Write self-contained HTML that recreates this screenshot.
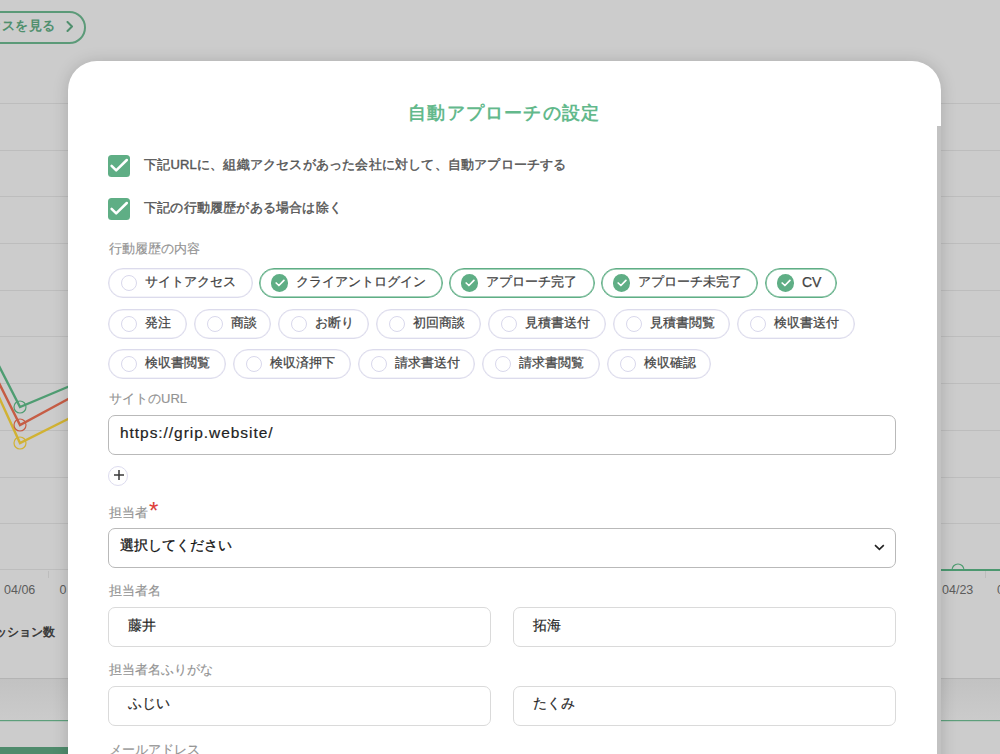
<!DOCTYPE html>
<html lang="ja">
<head>
<meta charset="utf-8">
<style>
*{box-sizing:border-box;margin:0;padding:0}
html,body{width:1000px;height:754px;overflow:hidden}
body{position:relative;background:#cccccc;font-family:"Liberation Sans",sans-serif;color:#333}
.abs{position:absolute}
.grid{position:absolute;left:0;width:1000px;height:1px;background:#bdbdbd}
.pillbtn{position:absolute;left:-60px;top:11px;width:146px;height:33px;border:2px solid #5b9a78;border-radius:17px;color:#4f8f6d;font-weight:bold;font-size:13px}
.modal{position:absolute;left:67.6px;top:61.2px;width:873.4px;height:760px;background:#fff;border-radius:29px 29px 0 0;box-shadow:0 1px 16px rgba(0,0,0,0.17)}
.scroll{position:absolute;left:937px;top:126px;width:4px;height:640px;background:#c2c2c2}
.title{position:absolute;left:408.3px;top:100.5px;font-size:18px;font-weight:bold;color:#63b98c;letter-spacing:1.2px;white-space:nowrap}
.cb{position:absolute;left:108px;width:22px;height:22px;border-radius:3.5px;background:#5fae85}
.cbl{position:absolute;left:144px;font-size:13px;color:#555;-webkit-text-stroke:0.4px #555;letter-spacing:0.2px;white-space:nowrap}
.lbl{position:absolute;left:109px;font-size:13px;color:#939393;-webkit-text-stroke:0.15px #939393;white-space:nowrap}
.chip{position:absolute;height:30px;border:1px solid #dcdbec;box-shadow:inset 0 0 0 0.6px rgba(222,221,238,0.7);border-radius:15px;font-size:13px;color:#444;white-space:nowrap}
.chip .ic{position:absolute;left:12px;top:6px;width:16px;height:16px;border:1px solid #d9d8ec;border-radius:50%}
.chip .tx{position:absolute;left:36px;top:5px;line-height:16px;-webkit-text-stroke:0.25px #444}
.chip.on{border:1px solid #5fae85;box-shadow:inset 0 0 0 0.8px rgba(95,174,133,0.75)}
.chip.on .ic{left:10.8px;top:5px;width:17.5px;height:17.5px;border:none;background:#5fae85}
.chip.on .tx{left:36px;top:5px}
.inp{position:absolute;height:40px;border:1px solid #b9b9b9;border-radius:7px;background:#fff;color:#222;white-space:nowrap}
.inp2{border-color:#dadada}
</style>
</head>
<body>
<!-- background page -->
<div class="pillbtn"><span class="abs" style="left:19px;top:4px;letter-spacing:0.5px;white-space:nowrap">アクセスを見る</span>
<svg class="abs" style="left:124px;top:7.5px" width="8" height="11" viewBox="0 0 8 11"><path d="M1.5 1 L6 5.5 L1.5 10" fill="none" stroke="#4f8f6d" stroke-width="2" stroke-linecap="round" stroke-linejoin="round"/></svg></div>
<div class="grid" style="top:103px"></div>
<div class="grid" style="top:150px"></div>
<div class="grid" style="top:196px"></div>
<div class="grid" style="top:243px"></div>
<div class="grid" style="top:290px"></div>
<div class="grid" style="top:336px"></div>
<div class="grid" style="top:383px"></div>
<div class="grid" style="top:430px"></div>
<div class="grid" style="top:477px"></div>
<div class="grid" style="top:523px"></div>
<div class="grid" style="top:569px"></div>
<svg class="abs" style="left:0;top:0" width="1000" height="754">
<defs><linearGradient id="band" x1="0" y1="0" x2="0" y2="1"><stop offset="0" stop-color="#c2c2c2"/><stop offset="1" stop-color="#cbcbcb"/></linearGradient></defs>
<g fill="none" stroke-width="2.4" stroke-linejoin="miter">
<polyline points="-2,364 20,407 70,386" stroke="#4f9d72"/>
<polyline points="-2,381 20,425 70,398" stroke="#c65d45"/>
<polyline points="-2,395 20,443 70,418" stroke="#d1b233"/>
</g>
<g fill="none" stroke-width="1.2">
<circle cx="20" cy="407" r="6" stroke="#4f9d72"/>
<circle cx="20" cy="425" r="6" stroke="#c65d45"/>
<circle cx="20" cy="443" r="6" stroke="#d1b233"/>
<path d="M952 570 A6 6 0 0 1 964 570" stroke="#4f9d72"/>
</g>
<line x1="940" y1="570" x2="1000" y2="570" stroke="#4c9870" stroke-width="1.8"/>
<line x1="48.5" y1="571" x2="48.5" y2="578" stroke="#bdbdbd" stroke-width="1"/>
<line x1="985.5" y1="571" x2="985.5" y2="578" stroke="#bdbdbd" stroke-width="1"/>
<rect x="0" y="678" width="1000" height="1" fill="#b4b4b4"/>
<rect x="0" y="679" width="1000" height="41" fill="url(#band)"/>
<rect x="0" y="720" width="1000" height="1.2" fill="#5d9f7b"/>
<rect x="0" y="747" width="68" height="7" fill="#4f8b6c"/>
</svg>
<div class="abs" style="left:4px;top:583px;font-size:12.5px;color:#5c5c5c">04/06</div>
<div class="abs" style="left:59.5px;top:583px;font-size:12.5px;color:#5c5c5c">0</div>
<div class="abs" style="left:942px;top:583px;font-size:12.5px;color:#5c5c5c">04/23</div>
<div class="abs" style="left:997px;top:583px;font-size:12.5px;color:#5c5c5c">0</div>
<div class="abs" style="left:-17px;top:624px;font-size:12.2px;color:#333;-webkit-text-stroke:0.45px #333;white-space:nowrap">セッション数</div>

<!-- modal -->
<div class="modal"></div>
<div class="scroll"></div>
<div class="title">自動アプローチの設定</div>

<div class="cb" style="top:155px"><svg width="22" height="22" viewBox="0 0 22 22"><path d="M3.6 10.8 L8.2 15.4 L18.8 5" fill="none" stroke="#fff" stroke-width="2.5" stroke-linecap="round" stroke-linejoin="round"/></svg></div>
<div class="cbl" style="top:156px">下記URLに、組織アクセスがあった会社に対して、自動アプローチする</div>
<div class="cb" style="top:198px"><svg width="22" height="22" viewBox="0 0 22 22"><path d="M3.6 10.8 L8.2 15.4 L18.8 5" fill="none" stroke="#fff" stroke-width="2.5" stroke-linecap="round" stroke-linejoin="round"/></svg></div>
<div class="cbl" style="top:199px">下記の行動履歴がある場合は除く</div>

<div class="lbl" style="top:240px">行動履歴の内容</div>

<div id="chips">
<div class="chip" style="left:108px;top:268px;width:145px"><span class="ic"></span><span class="tx">サイトアクセス</span></div>
<div class="chip on" style="left:259px;top:268px;width:184px"><span class="ic"><svg class="abs" style="left:3.8px;top:3.8px" width="10" height="10" viewBox="0 0 10 10"><path d="M1.2 5 L3.9 7.5 L8.9 2.4" fill="none" stroke="#fff" stroke-width="1.7" stroke-linecap="round" stroke-linejoin="round"/></svg></span><span class="tx">クライアントログイン</span></div>
<div class="chip on" style="left:449px;top:268px;width:146px"><span class="ic"><svg class="abs" style="left:3.8px;top:3.8px" width="10" height="10" viewBox="0 0 10 10"><path d="M1.2 5 L3.9 7.5 L8.9 2.4" fill="none" stroke="#fff" stroke-width="1.7" stroke-linecap="round" stroke-linejoin="round"/></svg></span><span class="tx">アプローチ完了</span></div>
<div class="chip on" style="left:601px;top:268px;width:157px"><span class="ic"><svg class="abs" style="left:3.8px;top:3.8px" width="10" height="10" viewBox="0 0 10 10"><path d="M1.2 5 L3.9 7.5 L8.9 2.4" fill="none" stroke="#fff" stroke-width="1.7" stroke-linecap="round" stroke-linejoin="round"/></svg></span><span class="tx">アプローチ未完了</span></div>
<div class="chip on" style="left:765px;top:268px;width:72px"><span class="ic"><svg class="abs" style="left:3.8px;top:3.8px" width="10" height="10" viewBox="0 0 10 10"><path d="M1.2 5 L3.9 7.5 L8.9 2.4" fill="none" stroke="#fff" stroke-width="1.7" stroke-linecap="round" stroke-linejoin="round"/></svg></span><span class="tx" style="font-size:14px;top:4.5px">CV</span></div>
<div class="chip" style="left:108px;top:308.5px;width:79px"><span class="ic"></span><span class="tx">発注</span></div>
<div class="chip" style="left:193.5px;top:308.5px;width:77.5px"><span class="ic"></span><span class="tx">商談</span></div>
<div class="chip" style="left:278px;top:308.5px;width:91px"><span class="ic"></span><span class="tx">お断り</span></div>
<div class="chip" style="left:376px;top:308.5px;width:105px"><span class="ic"></span><span class="tx">初回商談</span></div>
<div class="chip" style="left:488px;top:308.5px;width:118px"><span class="ic"></span><span class="tx">見積書送付</span></div>
<div class="chip" style="left:612.5px;top:308.5px;width:117.5px"><span class="ic"></span><span class="tx">見積書閲覧</span></div>
<div class="chip" style="left:737px;top:308.5px;width:118px"><span class="ic"></span><span class="tx">検収書送付</span></div>
<div class="chip" style="left:108px;top:349px;width:118px"><span class="ic"></span><span class="tx">検収書閲覧</span></div>
<div class="chip" style="left:233px;top:349px;width:118px"><span class="ic"></span><span class="tx">検収済押下</span></div>
<div class="chip" style="left:358px;top:349px;width:117px"><span class="ic"></span><span class="tx">請求書送付</span></div>
<div class="chip" style="left:482px;top:349px;width:118px"><span class="ic"></span><span class="tx">請求書閲覧</span></div>
<div class="chip" style="left:607px;top:349px;width:104px"><span class="ic"></span><span class="tx">検収確認</span></div>
</div>

<div class="lbl" style="top:390px">サイトのURL</div>
<div class="inp" style="left:108px;top:415px;width:788px"><span class="abs" style="left:11px;top:8px;font-size:15.5px;letter-spacing:0.95px;-webkit-text-stroke:0.2px #222">https://grip.website/</span></div>
<div class="abs" style="left:108px;top:465.5px;width:20px;height:20px;border:1px solid #dddcef;border-radius:50%"><svg class="abs" style="left:3.5px;top:2.5px" width="12" height="12" viewBox="0 0 12 12"><path d="M6 1 V11 M1 6 H11" stroke="#3a3a3a" stroke-width="1.5"/></svg></div>

<div class="lbl" style="top:504px">担当者<span style="color:#e53935;font-size:24px;position:absolute;left:40px;top:-4.5px;line-height:22px">*</span></div>
<div class="inp" style="left:108px;top:528px;width:788px"><span class="abs" style="left:11px;top:8px;font-size:14px;color:#111;-webkit-text-stroke:0.3px #111">選択してください</span>
<svg class="abs" style="left:765px;top:15px" width="11" height="7" viewBox="0 0 11 7"><path d="M1 1.2 L5.4 5.4 L9.8 1.2" fill="none" stroke="#222" stroke-width="1.6"/></svg></div>

<div class="lbl" style="top:582px">担当者名</div>
<div class="inp inp2" style="left:108px;top:606.5px;width:383px"><span class="abs" style="left:19px;top:9.5px;font-size:14px;-webkit-text-stroke:0.2px #333">藤井</span></div>
<div class="inp inp2" style="left:513px;top:606.5px;width:383px"><span class="abs" style="left:19px;top:9.5px;font-size:14px;-webkit-text-stroke:0.2px #333">拓海</span></div>

<div class="lbl" style="top:661px">担当者名ふりがな</div>
<div class="inp inp2" style="left:108px;top:686px;width:383px"><span class="abs" style="left:19px;top:7.5px;font-size:14px;-webkit-text-stroke:0.2px #333">ふじい</span></div>
<div class="inp inp2" style="left:513px;top:686px;width:383px"><span class="abs" style="left:19px;top:7.5px;font-size:14px;-webkit-text-stroke:0.2px #333">たくみ</span></div>

<div class="lbl" style="top:741px">メールアドレス</div>
</body>
</html>
